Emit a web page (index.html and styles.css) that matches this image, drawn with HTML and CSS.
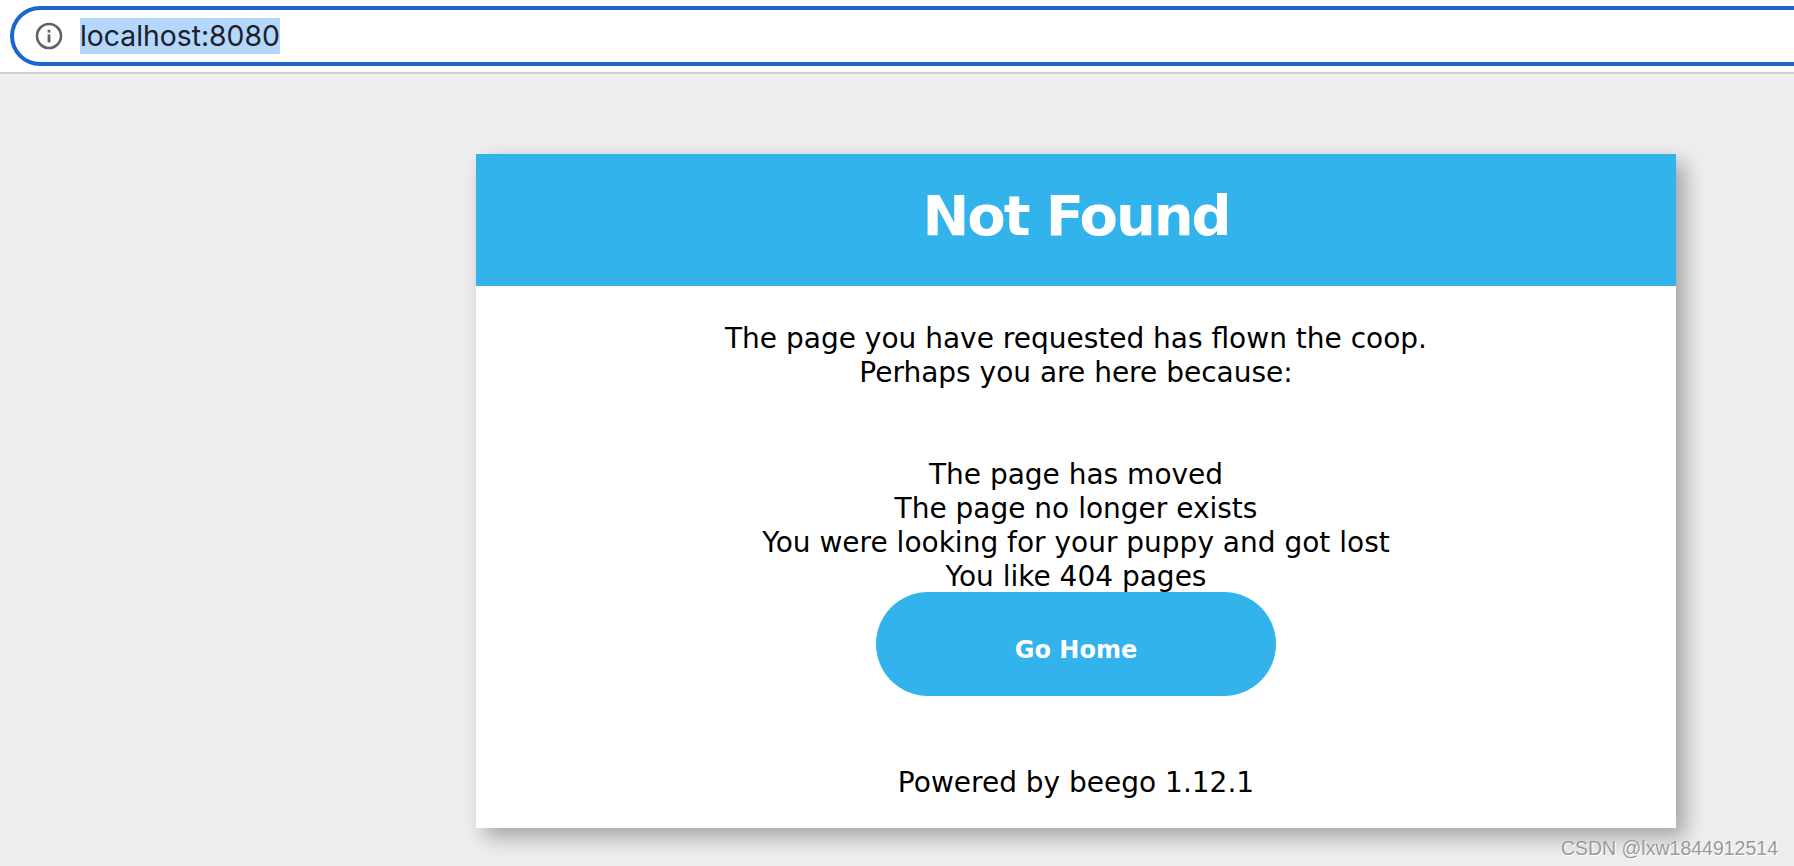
FILE: index.html
```html
<!doctype html>
<html lang="en">
<head>
    <meta charset="utf-8">
    <title>Not Found</title>
    <link rel="stylesheet" href="styles.css">
</head>
<body>

<div class="top-bar">
    <div class="address-box">
        <svg class="info-icon" viewBox="0 0 28 28" focusable="false">
            <circle cx="14" cy="14" r="12" fill="none" stroke="#5f6368" stroke-width="2.6"></circle>
            <rect x="12.6" y="12.4" width="2.8" height="8" fill="#5f6368"></rect>
            <rect x="12.6" y="7.8" width="2.8" height="2.8" fill="#5f6368"></rect>
        </svg>
        <span class="address-text">localhost:8080</span>
    </div>
</div>

<div class="main">
    <div class="card">
        <div class="card-header">
            <h1>Not Found</h1>
        </div>
        <div class="card-body">
            <p class="intro">The page you have requested has flown the coop.<br>Perhaps you are here because:</p>
            <ul class="reasons">
                <li>The page has moved</li>
                <li>The page no longer exists</li>
                <li>You were looking for your puppy and got lost</li>
                <li>You like 404 pages</li>
            </ul>
            <a class="home-button" href="#">Go Home</a>
            <p class="powered">Powered by beego 1.12.1</p>
        </div>
    </div>
</div>

<div class="watermark">CSDN @lxw1844912514</div>

</body>
</html>
```

FILE: styles.css
```css
html, body {
    height: 100%;
}

body {
    margin: 0;
    overflow: hidden;
    display: flex;
    flex-direction: column;
    background-color: #eeeeee;
    font-family: 'DejaVu Sans', sans-serif;
    color: #000;
}

.top-bar {
    height: 74px;
    box-sizing: border-box;
    padding: 6px 0 0 10px;
    background-color: #fff;
    border-bottom: 2px solid #cfcfcf;
    flex-shrink: 0;
}

.address-box {
    display: flex;
    align-items: center;
    height: 60px;
    box-sizing: border-box;
    border: 4px solid #1a66cc;
    border-right: none;
    border-radius: 30px 0 0 30px;
    padding-left: 21px;
}

.info-icon {
    width: 28px;
    height: 28px;
    flex-shrink: 0;
}

.address-text {
    margin-left: 17px;
    line-height: 36px;
    font-family: 'Inter', 'Roboto', sans-serif;
    font-size: 28.3px;
    color: #202124;
    background-color: #b3d7ff;
}

.main {
    padding: 80px 0 0 476px;
}

.card {
    width: 1200px;
    background-color: #fff;
    box-shadow: 9px 9px 20px rgba(0, 0, 0, .32);
}

.card-header {
    height: 132px;
    box-sizing: border-box;
    padding-bottom: 10px;
    display: flex;
    align-items: center;
    justify-content: center;
    background-color: #33b3eb;
}

h1 {
    margin: 0;
    font-size: 56px;
    font-weight: bold;
    letter-spacing: -2.1px;
    color: #fff;
}

.card-body {
    padding: 36px 0 28px;
    text-align: center;
    font-size: 28px;
    line-height: 34px;
}

.intro {
    margin: 0 0 68px;
}

.reasons {
    margin: 0;
    padding: 0;
    list-style: none;
}

.home-button {
    display: block;
    box-sizing: border-box;
    width: 400px;
    height: 104px;
    margin: -2px auto 70px;
    padding-top: 41px;
    border-radius: 52px;
    position: relative;
    background-color: #33b3eb;
    color: #fff;
    font-size: 24px;
    font-weight: bold;
    text-decoration: none;
}

.powered {
    margin: 0;
}

.watermark {
    position: absolute;
    right: 16px;
    bottom: 6px;
    font-family: 'Liberation Sans', sans-serif;
    font-size: 19.5px;
    color: #9a9a9a;
    text-shadow: 1px 1px 0 #fff;
}
```
